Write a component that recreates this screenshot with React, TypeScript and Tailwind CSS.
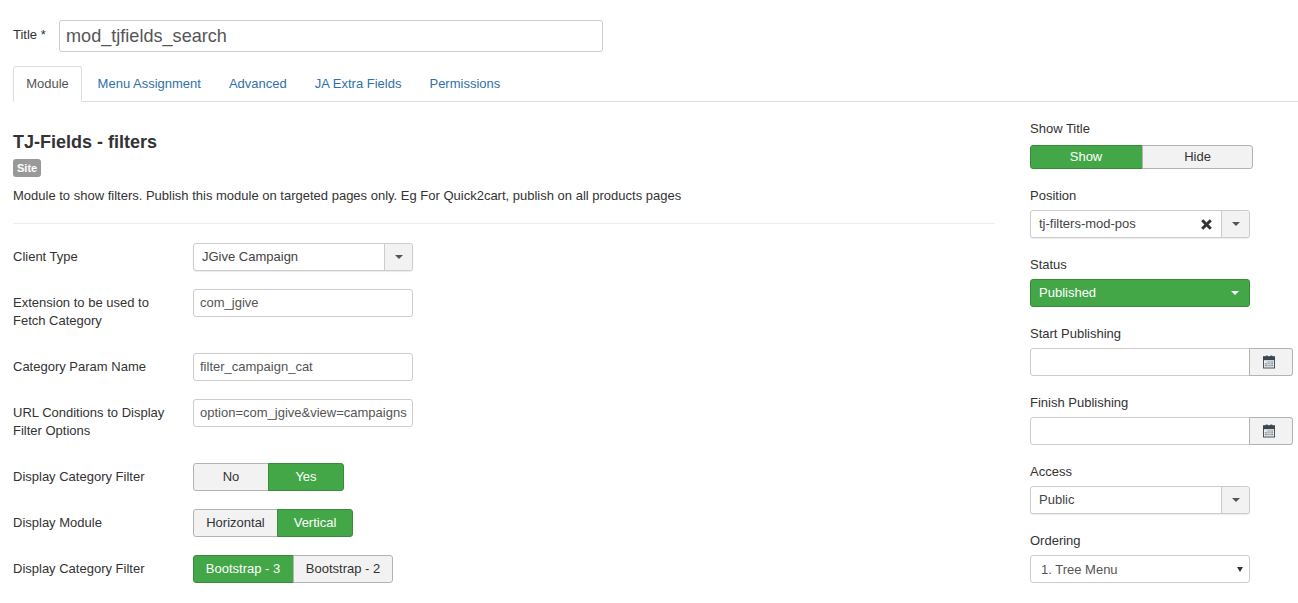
const labelCls = 'w-[180px] shrink-0 py-[5px] leading-[18px]'

function Caret({ color = 'border-t-[#555]' }: { color?: string }) {
  return <span className={`w-0 h-0 border-x-[4px] border-x-transparent border-t-[4px] ${color}`} />
}

function ChosenSelect({ value, clear, w = 'w-[220px]' }: { value: string; clear?: boolean; w?: string }) {
  return (
    <div className={`${w} h-[28px] flex rounded-[3px] border border-[#ccc] shadow-[0_1px_1px_rgba(0,0,0,0.08)] bg-white`}>
      <div className="flex-1 flex items-center justify-between pl-2 pr-[9px] text-[#444]">
        <span>{value}</span>
        {clear && (
          <svg width="11" height="11" viewBox="0 0 11 11">
            <path d="M1.2 1.2L9.8 9.8M9.8 1.2L1.2 9.8" stroke="#333" strokeWidth="3" />
          </svg>
        )}
      </div>
      <div className="w-[28px] flex items-center justify-center bg-[#f2f2f2] border-l border-[#ccc] rounded-r-[3px]">
        <Caret />
      </div>
    </div>
  )
}

function TextInput({ value, w = 'w-[220px]' }: { value: string; w?: string }) {
  return (
    <div className={`${w} h-[28px] flex items-center px-[6px] rounded-[3px] border border-[#ccc] bg-white text-[#555] overflow-hidden whitespace-nowrap`}>
      {value}
    </div>
  )
}

function Toggle({ items, h = 'h-[28px]' }: { items: { label: string; on: boolean; w: string }[]; h?: string }) {
  return (
    <div className={`flex ${h}`}>
      {items.map((item, i) => (
        <div
          key={item.label}
          className={`${item.w} flex items-center justify-center border ${
            item.on ? 'bg-[#43a748] border-[#378c3b] text-white' : 'bg-[#f2f2f2] border-[#b3b3b3] text-[#333]'
          } ${i === 0 ? 'rounded-l-[3px]' : 'rounded-r-[3px] -ml-px'} ${i === 0 && item.on ? 'pr-px' : ''}`}
        >
          {item.label}
        </div>
      ))}
    </div>
  )
}

function CalendarIcon() {
  return (
    <svg width="12" height="14" viewBox="0 0 13 14" className="-ml-[4px]">
      <rect x="0.5" y="1.5" width="12" height="12" fill="#eef0f1" stroke="#3a4650" />
      <rect x="0" y="1" width="13" height="4" fill="#3a4650" />
      <rect x="3" y="0" width="2" height="2" fill="#3a4650" />
      <rect x="8" y="0" width="2" height="2" fill="#3a4650" />
      <path d="M4 7h7M2 9h9M2 11h9" stroke="#5d6a75" strokeWidth="1" />
      <path d="M4.5 6v6M6.5 6v6M8.5 6v6" stroke="#eef0f1" strokeWidth="0.7" />
    </svg>
  )
}

function DateInput() {
  return (
    <div className="w-[263px] h-[28px] flex rounded-[3px] border border-[#ccc] bg-white">
      <div className="flex-1" />
      <div className="w-[44px] flex items-center justify-center bg-[#f2f2f2] rounded-r-[3px] -my-px -mr-px border border-[#b3b3b3]">
        <CalendarIcon />
      </div>
    </div>
  )
}

function Row({ label, children, className = 'mb-[18px]' }: { label: React.ReactNode; children: React.ReactNode; className?: string }) {
  return (
    <div className={`flex ${className}`}>
      <div className={labelCls}>{label}</div>
      {children}
    </div>
  )
}

function SideField({ label, children }: { label: string; children: React.ReactNode }) {
  return (
    <div className="mb-[18px]">
      <div className="leading-[18px] mb-[5px]">{label}</div>
      {children}
    </div>
  )
}

export default function App() {
  return (
    <div className="h-[603px] overflow-hidden bg-white text-[13px] leading-[18px] text-[#333] px-[13px] pt-[20px]" style={{ fontFamily: '"Liberation Sans", Arial, sans-serif' }}>
      <div className="flex items-start">
        <div className="w-[46px] pt-[6px]">Title *</div>
        <div className="w-[544px] h-[32px] flex items-center px-[6px] rounded-[3px] border border-[#ccc] text-[18.1px] text-[#555]">mod_tjfields_search</div>
      </div>

      <div className="flex mt-[14px] -mr-[13px] h-[36px] border-b border-[#ddd]">
        <div className="h-[36px] w-[69px] justify-center flex items-center border border-[#ddd] border-b-white rounded-t-[3px] bg-white text-[#555]">Module</div>
        <div className="flex ml-[1.6px]">
          {['Menu Assignment', 'Advanced', 'JA Extra Fields', 'Permissions'].map((t) => (
            <div key={t} className="h-[35px] px-[14px] flex items-center text-[#3071a9]">{t}</div>
          ))}
        </div>
      </div>

      <div className="flex mt-[18px]">
        <div className="w-[982px] shrink-0">
          <h2 className="text-[18px] font-bold leading-[22px] mt-[11px]">TJ-Fields - filters</h2>
          <span className="inline-flex items-center h-[18px] mt-[6px] px-[4px] rounded-[3px] bg-[#999] text-white text-[11px] font-bold">Site</span>
          <p className="mt-[10px] leading-[18px]">Module to show filters. Publish this module on targeted pages only. Eg For Quick2cart, publish on all products pages</p>
          <hr className="mt-[18px] mb-[19px] border-t border-[#eee]" />

          <Row label="Client Type"><ChosenSelect value="JGive Campaign" /></Row>
          <Row label={<>Extension to be used to<br />Fetch Category</>}><TextInput value="com_jgive" /></Row>
          <Row label="Category Param Name"><TextInput value="filter_campaign_cat" /></Row>
          <Row label={<>URL Conditions to Display<br />Filter Options</>}><TextInput value="option=com_jgive&view=campaigns" /></Row>
          <Row label="Display Category Filter">
            <Toggle items={[{ label: 'No', on: false, w: 'w-[76px]' }, { label: 'Yes', on: true, w: 'w-[76px]' }]} />
          </Row>
          <Row label="Display Module">
            <Toggle items={[{ label: 'Horizontal', on: false, w: 'w-[85px]' }, { label: 'Vertical', on: true, w: 'w-[76px]' }]} />
          </Row>
          <Row label="Display Category Filter">
            <Toggle items={[{ label: 'Bootstrap - 3', on: true, w: 'w-[101px]' }, { label: 'Bootstrap - 2', on: false, w: 'w-[100px]' }]} />
          </Row>
        </div>

        <div className="ml-[35px] w-[263px] shrink-0">
          <div className="mb-[18px]">
            <div className="leading-[18px] mb-[7px]">Show Title</div>
            <Toggle h="h-[24px]" items={[{ label: 'Show', on: true, w: 'w-[113px]' }, { label: 'Hide', on: false, w: 'w-[111px]' }]} />
          </div>
          <SideField label="Position"><ChosenSelect value="tj-filters-mod-pos" clear /></SideField>
          <SideField label="Status">
            <div className="w-[220px] h-[28px] flex items-center justify-between pl-2 pr-[10px] rounded-[3px] border border-[#378c3b] bg-[#43a748] text-white">
              <span>Published</span>
              <Caret color="border-t-white" />
            </div>
          </SideField>
          <SideField label="Start Publishing"><DateInput /></SideField>
          <SideField label="Finish Publishing"><DateInput /></SideField>
          <SideField label="Access"><ChosenSelect value="Public" /></SideField>
          <SideField label="Ordering">
            <div className="w-[220px] h-[28px] flex items-center justify-between pt-px pl-[10px] pr-[6px] rounded-[3px] border border-[#ccc] bg-white text-[#555]">
              <span>1. Tree Menu</span>
              <span className="w-0 h-0 border-x-[3px] border-x-transparent border-t-[5px] border-t-[#333]" />
            </div>
          </SideField>
        </div>
      </div>
    </div>
  )
}
